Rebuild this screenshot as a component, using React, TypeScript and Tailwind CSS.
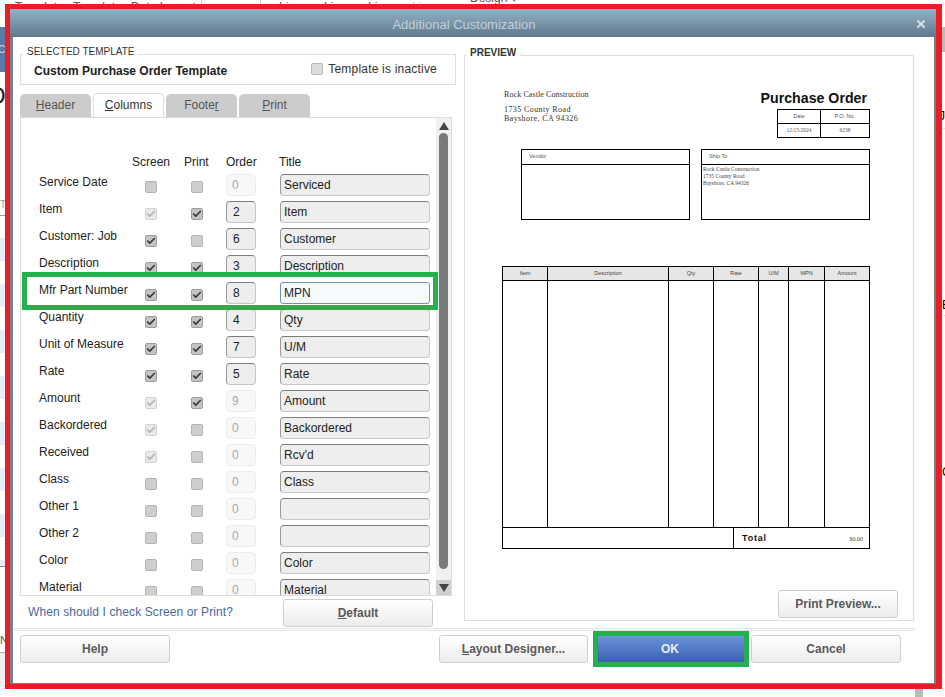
import { Check, X } from "lucide-react";

type Box = "off" | "on" | "locked";

const rows: { label: string; screen: Box; print: Box; order: string; live: boolean; title: string; focus?: boolean }[] = [
  { label: "Service Date", screen: "off", print: "off", order: "0", live: false, title: "Serviced" },
  { label: "Item", screen: "locked", print: "on", order: "2", live: true, title: "Item" },
  { label: "Customer: Job", screen: "on", print: "off", order: "6", live: true, title: "Customer" },
  { label: "Description", screen: "on", print: "on", order: "3", live: true, title: "Description" },
  { label: "Mfr Part Number", screen: "on", print: "on", order: "8", live: true, title: "MPN", focus: true },
  { label: "Quantity", screen: "on", print: "on", order: "4", live: true, title: "Qty" },
  { label: "Unit of Measure", screen: "on", print: "on", order: "7", live: true, title: "U/M" },
  { label: "Rate", screen: "on", print: "on", order: "5", live: true, title: "Rate" },
  { label: "Amount", screen: "locked", print: "on", order: "9", live: false, title: "Amount" },
  { label: "Backordered", screen: "locked", print: "off", order: "0", live: false, title: "Backordered" },
  { label: "Received", screen: "locked", print: "off", order: "0", live: false, title: "Rcv'd" },
  { label: "Class", screen: "off", print: "off", order: "0", live: false, title: "Class" },
  { label: "Other 1", screen: "off", print: "off", order: "0", live: false, title: "" },
  { label: "Other 2", screen: "off", print: "off", order: "0", live: false, title: "" },
  { label: "Color", screen: "off", print: "off", order: "0", live: false, title: "Color" },
  { label: "Material", screen: "off", print: "off", order: "0", live: false, title: "Material" },
];

const stripes = [0, 1, 2, 3, 4, 5, 6];
const docColumns = ["Item", "Description", "Qty", "Rate", "U/M", "MPN", "Amount"];

const CheckBox = ({ state }: { state: Box }) => {
  if (state === "off") {
    return <div className="w-3 h-3 rounded-[2px] bg-[#cecece] border border-[#b4b4b4]" />;
  }
  if (state === "locked") {
    return (
      <div className="w-3 h-3 rounded-[2px] bg-[#e9e9e9] border border-[#d2d2d2] flex items-center justify-center text-[#b4b4b4]">
        <Check size={10} strokeWidth={4} />
      </div>
    );
  }
  return (
    <div className="w-3 h-3 rounded-[2px] bg-[#c4c4c4] border border-[#9c9c9c] flex items-center justify-center text-[#3a3a3a]">
      <Check size={10} strokeWidth={4} />
    </div>
  );
};

const Button = ({ children, className }: { children: React.ReactNode; className: string }) => (
  <div
    className={`h-7 flex items-center justify-center rounded-[3px] border border-[#cfcfcf] bg-gradient-to-b from-white to-[#ececec] text-xs font-bold text-[#5a5a5a] ${className}`}
  >
    {children}
  </div>
);

const Tab = ({ children, active }: { children: React.ReactNode; active?: boolean }) =>
  active ? (
    <div className="w-[71px] h-[24px] pb-[2px] flex items-center justify-center rounded-t-[5px] border border-b-0 border-[#ddd] bg-white text-xs text-[#333] z-10 -mb-px">
      {children}
    </div>
  ) : (
    <div className="w-[71px] h-[23px] mt-px pb-[2px] flex items-center justify-center rounded-t-[5px] bg-[#cccccc] text-xs text-[#555]">
      {children}
    </div>
  );

const App = () => {
  return (
    <div className="w-[945px] h-[697px] overflow-hidden bg-white font-['Liberation_Sans',sans-serif] flex flex-col">
      {/* bits of the window behind the dialog */}
      <div className="h-1 overflow-hidden flex text-xs text-[#555] leading-none">
        <span className="ml-[15px] w-[58px] mt-px shrink-0">Templates</span>
        <span className="w-[58px] mt-px shrink-0">Templates</span>
        <span className="w-[70px] mt-px shrink-0">Data Layout</span>
        <div className="w-px h-1 bg-[#ccc] shrink-0" />
        <div className="ml-[58px] w-px h-1 bg-[#ccc] shrink-0" />
        <span className="ml-[18px] w-[45px] mt-px shrink-0">Line</span>
        <span className="w-[44px] mt-px shrink-0">Line</span>
        <span className="w-[44px] mt-px shrink-0">Line</span>
        <span className="w-[58px] mt-px shrink-0 text-[#ccc]">Line</span>
        <span className="-mt-2 shrink-0">Design ▾</span>
      </div>

      <div className="flex">
        <div className="w-[5px] flex flex-col overflow-hidden text-[#555]">
          <div className="h-[23px]" />
          <div className="h-[45px] bg-[#5a7aa6] flex items-center text-[10px] text-[#dde] leading-none">
            <span className="-ml-[2px]">C</span>
          </div>
          <div className="h-[12px]" />
          <div className="h-[24px] flex items-center text-2xl leading-none text-[#222]">
            <span className="-ml-[13px]">O</span>
          </div>
          <div className="h-[92px]" />
          <div className="h-[12px] text-[10px] leading-none text-[#999]">TE</div>
          <div className="h-[4px] border-b border-[#999]" />
          <div className="h-[22px]" />
          {stripes.map((s) => (
            <div key={s} className="h-[46px] shrink-0">
              <div className="h-[23px] bg-[#e6ecfb]" />
            </div>
          ))}
          <div className="h-[6px] bg-[#e6ecfb] shrink-0" />
          <div className="h-px bg-[#888] shrink-0" />
          <div className="h-[68px] shrink-0" />
          <div className="h-[13px] text-[11px] leading-none shrink-0">N</div>
          <div className="h-[5px] border-b border-[#aaa] shrink-0" />
          <div className="h-[34px] bg-[#efefef] shrink-0" />
        </div>

        {/* red annotation frame */}
        <div className="w-[937px] h-[685px] shrink-0 border-[5px] border-r-[6px] border-[#ed1c24]">
          <div className="h-full flex flex-col border-l-[3px] border-r-[2px] border-b border-[#6f8194] bg-white">
            <div className="-ml-[3px] -mr-[2px] h-[28px] shrink-0 flex items-center justify-center relative pt-[3px] pr-[18px] bg-gradient-to-b from-[#94b2c6] to-[#5f798e] text-[13px] text-[#c3d0d9]">
              Additional Customization
              <X size={12} strokeWidth={4} className="absolute right-[9px] top-[9px] text-[#d6dee4]" />
            </div>

            <div className="h-[591px] shrink-0 flex pl-[7px]">
              {/* left column */}
              <div className="w-[436px] pt-[17px] flex flex-col">
                <div className="relative h-[31px] border border-[#dedede] flex items-center pl-[13px] pr-[18px] justify-between">
                  <span className="absolute left-[2px] -top-[9px] bg-white px-[4px] text-[10px] leading-3 text-[#333]">
                    SELECTED TEMPLATE
                  </span>
                  <span className="text-xs font-bold text-[#222] mt-[2px]">Custom Purchase Order Template</span>
                  <div className="flex items-center gap-[5px] -mt-px">
                    <div className="w-3 h-3 rounded-[2px] bg-[#dcdcdc] border border-[#b8b8b8]" />
                    <span className="text-xs tracking-[0.2px] text-[#333]">Template is inactive</span>
                  </div>
                </div>

                <div className="flex gap-[2px] mt-[8px]">
                  <Tab><span><u>H</u>eader</span></Tab>
                  <Tab active><span><u>C</u>olumns</span></Tab>
                  <Tab><span>Foote<u>r</u></span></Tab>
                  <Tab><span><u>P</u>rint</span></Tab>
                </div>

                <div className="relative w-[432px] h-[479px] shrink-0 border border-[#dddddd] flex overflow-hidden">
                  <div className="flex-1 pl-[18px] pt-[36px] text-xs text-[#222]">
                    <div className="grid grid-cols-[106px_46px_35px_54px_150px] h-[20px]">
                      <div />
                      <div className="-ml-[13px]">Screen</div>
                      <div className="-ml-[7px]">Print</div>
                      <div>Order</div>
                      <div className="-ml-px">Title</div>
                    </div>
                    {rows.map((row) => (
                      <div
                        key={row.label}
                        className="grid grid-cols-[106px_46px_35px_54px_150px] h-[27px]"
                      >
                        <div className="leading-4 text-[#222]">{row.label}</div>
                        <div className="pt-[7px]">
                          <CheckBox state={row.screen} />
                        </div>
                        <div className="pt-[7px]">
                          <CheckBox state={row.print} />
                        </div>
                        {row.live ? (
                          <div className="w-[30px] h-[22px] rounded-[4px] bg-[#eeeeee] border border-[#c4c4c4] border-t-[#7d7d7d] border-l-[#9a9a9a] pl-[6px] leading-5">
                            {row.order}
                          </div>
                        ) : (
                          <div className="w-[30px] h-[22px] rounded-[4px] bg-[#f8f8f8] border border-[#ececec] pl-[5px] leading-5 text-[#aaa]">
                            {row.order}
                          </div>
                        )}
                        {row.focus ? (
                          <div className="w-[150px] h-[22px] rounded-[3px] bg-[#f6fafd] border border-[#6e8fc4] pl-[3px] leading-5">
                            {row.title}
                          </div>
                        ) : (
                          <div className="w-[150px] h-[22px] rounded-[4px] bg-[#eeeeee] border border-[#c8c8c8] border-t-[#7d7d7d] border-l-[#9a9a9a] pl-[3px] leading-5">
                            {row.title}
                          </div>
                        )}
                      </div>
                    ))}
                  </div>

                  <div className="w-[15px] shrink-0 bg-[#f0f0f0] flex flex-col items-center">
                    <div className="h-[15px] flex items-center justify-center">
                      <div className="w-0 h-0 border-x-[5px] border-x-transparent border-b-[8px] border-b-[#444]" />
                    </div>
                    <div className="w-[9px] h-[436px] mb-[11px] rounded-[5px] bg-[#777c7b]" />
                    <div className="w-full flex-1 bg-[#cfcfcf] flex items-center justify-center">
                      <div className="w-0 h-0 border-x-[5px] border-x-transparent border-t-[8px] border-t-[#444]" />
                    </div>
                  </div>

                  <div className="absolute left-px top-[154px] w-[416px] h-[38px] border-[5px] border-[#22b14c]" />
                </div>

                <div className="flex justify-between items-start pl-[8px] pr-[23px] mt-[3px]">
                  <span className="mt-[5px] text-xs tracking-[0.1px] text-[#4a679c]">When should I check Screen or Print?</span>
                  <Button className="w-[150px]"><span><u>D</u>efault</span></Button>
                </div>
              </div>

              {/* preview column */}
              <div className="relative w-[450px] h-[566px] mt-[18px] ml-[8px] border border-[#dedede] flex flex-col">
                <span className="absolute left-[1px] -top-[9px] bg-white px-[4px] text-[10px] font-bold leading-3 text-[#333]">
                  PREVIEW
                </span>

                <div className="ml-[37px] w-[368px] mt-[34px] flex flex-col">
                  <div className="h-[59px] flex justify-between">
                    <div className="pl-[2px] font-['Liberation_Serif',serif] text-[8px] tracking-[0.1px] text-[#333]">
                      <div className="leading-[10px]">Rock Castle Construction</div>
                      <div className="mt-[5px] leading-[9px] tracking-[0.4px]">1735 County Road</div>
                      <div className="leading-[9px] tracking-[0.4px]">Bayshore, CA 94326</div>
                    </div>
                    <div className="flex flex-col items-end">
                      <div className="h-[19px] text-[14.2px] font-bold leading-[17px] text-[#111] pr-[3px]">Purchase Order</div>
                      <div className="w-[93px] h-[29px] border border-black grid grid-cols-[43px_1fr] grid-rows-2 text-[5.5px] text-[#555] text-center leading-[13px]">
                        <div className="border-r border-b border-black">Date</div>
                        <div className="border-b border-black">P.O. No.</div>
                        <div className="border-r border-black font-['Liberation_Serif',serif]">12/15/2024</div>
                        <div className="font-['Liberation_Serif',serif]">6238</div>
                      </div>
                    </div>
                  </div>

                  <div className="flex pl-[19px] gap-[11px] h-[71px]">
                    <div className="w-[169px] border border-black">
                      <div className="h-[15px] border-b border-black pl-[7px] text-[5.5px] leading-[13px] text-[#555]">Vendor</div>
                    </div>
                    <div className="w-[169px] border border-black">
                      <div className="h-[15px] border-b border-black pl-[7px] text-[5.5px] leading-[13px] text-[#555]">Ship To</div>
                      <div className="pl-px pt-px font-['Liberation_Serif',serif] text-[5.5px] leading-[7px] text-[#444]">
                        <div>Rock Castle Construction</div>
                        <div>1735 County Road</div>
                        <div>Bayshore, CA 94326</div>
                      </div>
                    </div>
                  </div>

                  <div className="mt-[46px] w-[368px] h-[283px] border border-black flex flex-col">
                    <div className="h-[14px] shrink-0 grid grid-cols-[45px_121px_45px_45px_30px_36px_1fr] bg-[#e6e6e6] border-b border-black text-[5.5px] text-[#444] text-center leading-[12px]">
                      {docColumns.map((c, i) => (
                        <div key={c} className={i < 6 ? "border-r border-black" : ""}>{c}</div>
                      ))}
                    </div>
                    <div className="flex-1 grid grid-cols-[45px_121px_45px_45px_30px_36px_1fr]">
                      {docColumns.map((c, i) => (
                        <div key={c} className={i < 6 ? "border-r border-black" : ""} />
                      ))}
                    </div>
                    <div className="h-[21px] shrink-0 border-t border-black flex">
                      <div className="w-[231px] border-r border-black" />
                      <div className="flex-1 flex items-center justify-between pl-[8px] pr-[6px]">
                        <span className="mt-[2px] text-[9px] font-bold tracking-[0.8px] text-[#111]">Total</span>
                        <span className="text-[6px] font-['Liberation_Serif',serif] text-[#444] mt-[3px]">$0.00</span>
                      </div>
                    </div>
                  </div>
                </div>

                <Button className="w-[120px] mt-auto mb-[2px] self-end mr-[15px]">Print Preview...</Button>
              </div>
            </div>

            <div className="ml-px w-[901px] h-[3px] shrink-0 border-y border-[#e2e2e2]" />

            <div className="flex items-start pl-[7px] pt-[4px]">
              <Button className="w-[150px]">Help</Button>
              <Button className="w-[149px] ml-[269px]"><span><u>L</u>ayout Designer...</span></Button>
              <div className="w-[156px] h-[36px] -mt-[4px] ml-[5px] border-[5px] border-[#22b14c]">
                <div className="h-full flex items-center justify-center pr-[2px] bg-gradient-to-b from-[#6b94d9] to-[#3b60b2] text-xs font-bold text-[#e8effb]">
                  OK
                </div>
              </div>
              <Button className="w-[150px] ml-[2px]">Cancel</Button>
            </div>
          </div>
        </div>

        <div className="w-[3px] flex flex-col overflow-hidden text-black">
          <div className="h-[23px] shrink-0" />
          <div className="h-[25px] shrink-0 bg-[#bbbbbb]" />
          <div className="h-[58px] shrink-0" />
          <div className="h-[18px] shrink-0 text-xs leading-none">
            <span className="-ml-[3px]">J</span>
          </div>
          <div className="h-px shrink-0 bg-[#ddd]" />
          <div className="h-[170px] shrink-0" />
          <div className="h-[16px] shrink-0 text-xs leading-none">E</div>
          <div className="h-px shrink-0 bg-[#ddd]" />
          <div className="h-[150px] shrink-0" />
          <div className="h-[16px] shrink-0 text-xs leading-none">C</div>
        </div>
      </div>

      <div className="h-2 shrink-0">
        <div className="ml-[915px] w-2 h-full bg-[#bbbbbb]" />
      </div>
    </div>
  );
};

export default App;
